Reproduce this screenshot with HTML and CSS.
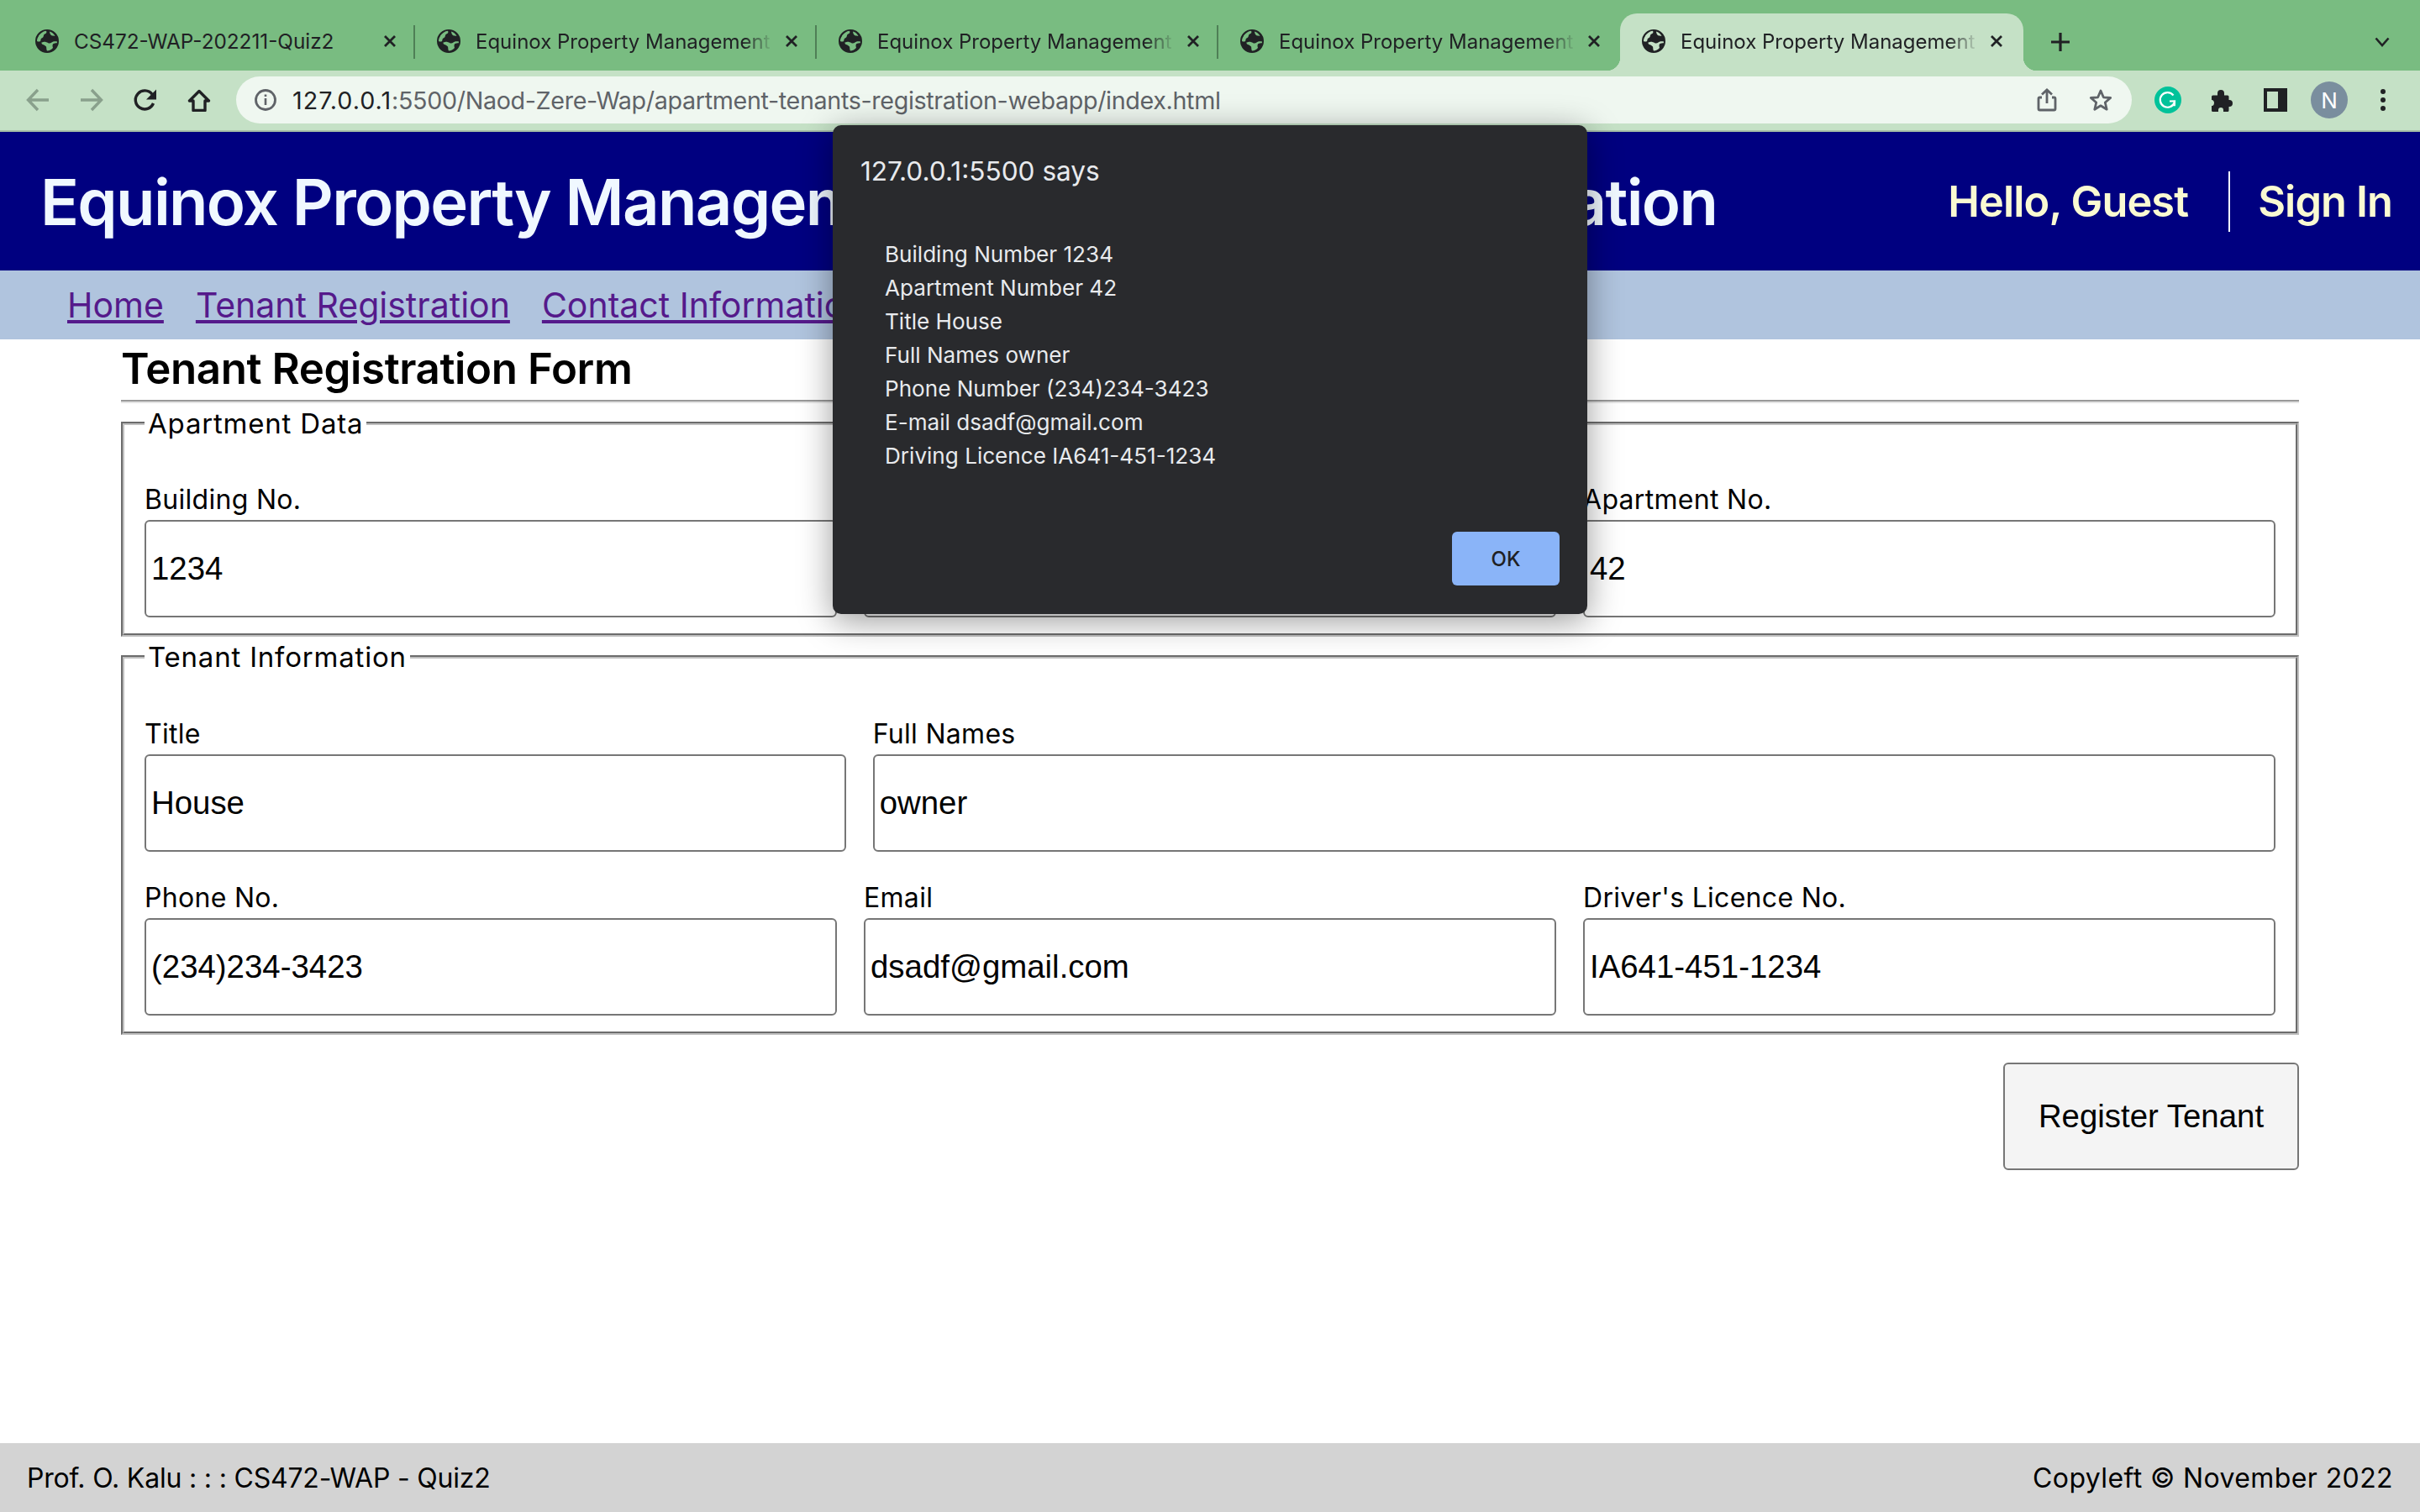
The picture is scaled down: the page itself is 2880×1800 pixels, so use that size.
FILE: index.html
```html
<!DOCTYPE html>
<html lang="en">
<head>
  <meta charset="UTF-8" />
  <title>Equinox Property Management</title>
  <link rel="stylesheet" href="styles.css">
</head>
<body>
  <svg class="defs" width="0" height="0">
    <symbol id="globe" viewBox="0 0 28 28">
      <path fill-rule="evenodd" d="M14 0a14 14 0 1 1 0 28a14 14 0 1 1 0-28z M4 8c-1.500 2-2 4-2 6c1 .5 3 1 4 0c.8-1 0-2.500 1.500-3.500c1.500-.5 2.500-2 2.500-3.500c.5-1.500 2-1.500 3-2.500c.5-1 .5-2 0-2.800c-3.500 .3-7 2.800-9 5.800z M17 2.500c.3 1.500 .5 3.500 2 4.500c1.500 .8 3 .5 4.500 1c-1.300-2.800-3.800-4.800-6.500-5.500z M8 15c-1 1-.5 2.500 1 3c2 .5 2.500 1.500 4 2.500c.5 1.500 0 3.500 1 5c3-.1 5-1.500 7-3.500c-.5-1.500-1-4 .5-5c1.500-.8 3-1 4.300-.8l.2-1.700c-2.500-.5-5-.3-6.500 1c-1.500 1.200-3 1.500-4.500 .5c-1.500-1-5-2-7 -.5z"/>
    </symbol>
    <symbol id="close" viewBox="0 0 16 14">
      <path d="M2 1l12 12M14 1L2 13" fill="none" stroke="currentColor" stroke-width="2.800"/>
    </symbol>
  </svg>

  <div class="tabstrip">
    <div class="tab">
      <svg class="favicon"><use href="#globe"/></svg>
      <span class="tab-title">CS472-WAP-202211-Quiz2</span>
      <svg class="tab-close"><use href="#close"/></svg>
    </div>
    <i class="tab-sep"></i>
    <div class="tab">
      <svg class="favicon"><use href="#globe"/></svg>
      <span class="tab-title fade">Equinox Property Management</span>
      <svg class="tab-close"><use href="#close"/></svg>
    </div>
    <i class="tab-sep"></i>
    <div class="tab">
      <svg class="favicon"><use href="#globe"/></svg>
      <span class="tab-title fade">Equinox Property Management</span>
      <svg class="tab-close"><use href="#close"/></svg>
    </div>
    <i class="tab-sep"></i>
    <div class="tab last">
      <svg class="favicon"><use href="#globe"/></svg>
      <span class="tab-title fade">Equinox Property Management</span>
      <svg class="tab-close"><use href="#close"/></svg>
    </div>
    <div class="tab active">
      <svg class="favicon"><use href="#globe"/></svg>
      <span class="tab-title fade">Equinox Property Management</span>
      <svg class="tab-close"><use href="#close"/></svg>
    </div>
    <svg class="new-tab" viewBox="0 0 24 24"><path d="M12 0v24M0 12h24" stroke="#202124" stroke-width="3.500"/></svg>
    <svg class="tab-list" viewBox="0 0 18 12"><path d="M1.500 1.500L9 10l7.500-8.500" fill="none" stroke="#202124" stroke-width="2.600"/></svg>
  </div>

  <div class="toolbar">
    <div class="tool"><svg class="icon" viewBox="0 0 28 28"><path d="M27 14H3M14 2L2.500 14L14 26" fill="none" stroke="#89a08c" stroke-width="3.400"/></svg></div>
    <div class="tool"><svg class="icon" viewBox="0 0 28 28"><path d="M1 14h24M14 2l11.500 12L14 26" fill="none" stroke="#89a08c" stroke-width="3.400"/></svg></div>
    <div class="tool"><svg class="icon" viewBox="0 0 28 28"><path d="M23.500 18a11 11 0 1 1-1.500-10.800" fill="none" stroke="#202124" stroke-width="3.400"/><path d="M27 1.500v12H15z" fill="#202124"/></svg></div>
    <div class="tool"><svg class="icon" viewBox="0 0 28 28"><path d="M7 26.500h14V15h4.500L14 3.500L2.500 15H7z" fill="none" stroke="#202124" stroke-width="3.400" stroke-linejoin="round"/></svg></div>
    <div class="omnibox">
      <svg class="info" viewBox="0 0 26 26"><circle cx="13" cy="13" r="11.500" fill="none" stroke="#5f6368" stroke-width="2.800"/><path d="M11.700 11h2.600v8h-2.600zM11.700 6.500h2.600v2.600h-2.600z" fill="#5f6368"/></svg>
      <span class="url"><b>127.0.0.1</b>:5500/Naod-Zere-Wap/apartment-tenants-registration-webapp/index.html</span>
      <div class="tool first"><svg class="icon" viewBox="0 0 28 28"><path d="M8 11H5.500a1.500 1.500 0 0 0-1.500 1.500v12a1.500 1.500 0 0 0 1.500 1.500h17a1.500 1.500 0 0 0 1.500-1.500v-12a1.500 1.500 0 0 0-1.500-1.500H20M14 18V2M8 7.500L14 2l6 5.500" fill="none" stroke="#5f6368" stroke-width="2.800"/></svg></div>
      <div class="tool"><svg class="icon" viewBox="0 0 28 28"><path d="M14 3l3.300 7.800l8.400 .7l-6.400 5.500l1.900 8.200L14 20.800l-7.200 4.400l1.900-8.200l-6.400-5.500l8.400-.7z" fill="none" stroke="#5f6368" stroke-width="2.800" stroke-linejoin="round"/></svg></div>
    </div>
    <div class="tool ext"><svg class="icon big" viewBox="0 0 32 32"><circle cx="16" cy="16" r="16" fill="#00c29a"/><path d="M22.500 10.500a8.800 8.800 0 1 0 1.300 8.500M18 17.500l6-.2l-.2 6" fill="none" stroke="#fff" stroke-width="2.200"/></svg></div>
    <div class="tool"><svg class="icon" viewBox="0 0 28 28"><path d="M2 10a1.500 1.500 0 0 1 1.500-1.500H9V6a4 4 0 0 1 8 0v2.500h4a1.500 1.500 0 0 1 1.500 1.500v4h.5a4 4 0 0 1 0 8h-.5v4.500A1.500 1.500 0 0 1 21 28h-5v-2a3 3 0 0 0-6 0v2H3.500A1.500 1.500 0 0 1 2 26.500V21h1a4 4 0 0 0 0-7H2z" fill="#202124"/></svg></div>
    <div class="tool"><svg class="icon" viewBox="0 0 28 28"><path fill-rule="evenodd" d="M0 0h28v28H0z M4 4v20h13V4z" fill="#202124"/></svg></div>
    <div class="tool"><span class="avatar">N</span></div>
    <div class="tool"><svg class="icon" viewBox="0 0 28 28"><circle cx="14" cy="4" r="3" fill="#202124"/><circle cx="14" cy="14" r="3" fill="#202124"/><circle cx="14" cy="24" r="3" fill="#202124"/></svg></div>
  </div>

  <div class="page">
    <header class="site-header">
      <h1 class="site-title">Equinox Property Management <span class="title-mid">- Web Tenant </span>Registration</h1>
      <div class="greeting">
        <span class="hello">Hello, Guest</span>
        <a class="signin">Sign In</a>
      </div>
    </header>

    <nav class="site-nav">
      <a href="#">Home</a>
      <a href="#">Tenant Registration</a>
      <a href="#">Contact Information</a>
    </nav>

    <main class="content">
      <h2 class="form-title">Tenant Registration Form</h2>
      <hr class="rule">
      <form>
        <fieldset class="apartment">
          <legend>Apartment Data</legend>
          <div class="row thirds">
            <div class="field"><label>Building No.</label><input type="text" value="1234"></div>
            <div class="field"><label>Unit</label><input type="text" value=""></div>
            <div class="field"><label>Apartment No.</label><input type="text" value="42"></div>
          </div>
        </fieldset>
        <fieldset>
          <legend>Tenant Information</legend>
          <div class="row one-two">
            <div class="field"><label>Title</label><input type="text" value="House"></div>
            <div class="field"><label>Full Names</label><input type="text" value="owner"></div>
          </div>
          <div class="row thirds lower">
            <div class="field"><label>Phone No.</label><input type="text" value="(234)234-3423"></div>
            <div class="field"><label>Email</label><input type="text" value="dsadf@gmail.com"></div>
            <div class="field"><label>Driver's Licence No.</label><input type="text" value="IA641-451-1234"></div>
          </div>
        </fieldset>
        <div class="actions"><button type="button">Register Tenant</button></div>
      </form>
    </main>

    <footer class="site-footer">
      <span class="prof">Prof. O. Kalu : : : CS472-WAP - Quiz2</span>
      <span class="copy">Copyleft © November 2022</span>
    </footer>
  </div>

  <div class="dialog">
    <div class="dialog-origin">127.0.0.1:5500 says</div>
    <div class="dialog-text">
      <div>Building Number 1234</div>
      <div>Apartment Number 42</div>
      <div>Title House</div>
      <div>Full Names owner</div>
      <div>Phone Number (234)234-3423</div>
      <div>E-mail dsadf@gmail.com</div>
      <div>Driving Licence IA641-451-1234</div>
    </div>
    <div class="dialog-actions"><button type="button" class="ok">OK</button></div>
  </div>
</body>
</html>
```

FILE: styles.css
```css
* { box-sizing: border-box; }

html, body { margin: 0; height: 1800px; overflow: hidden; }

body {
  display: flex;
  flex-direction: column;
  background-color: #fff;
  font-family: Inter, "Liberation Sans", sans-serif;
  color: #000;
}

.defs { position: absolute; }

/* browser chrome */
.tabstrip {
  display: flex;
  align-items: flex-end;
  height: 84px;
  padding-left: 16px;
  background-color: #79bc81;
  flex: none;
}

.tab {
  display: flex;
  align-items: center;
  width: 476px;
  height: 68px;
  padding: 0 20px 2px 26px;
  color: #202124;
}

.tab.last { width: 483px; padding-right: 28px; margin-right: -5px; }

.tab.active {
  position: relative;
  width: 480px;
  padding-right: 24px;
  background-color: #c5e1c6;
  border-radius: 20px 20px 0 0;
}

.tab.active::before,
.tab.active::after {
  content: "";
  position: absolute;
  bottom: 0;
  width: 16px;
  height: 16px;
}

.tab.active::before {
  left: -16px;
  background: radial-gradient(circle at 0 0, transparent 16px, #c5e1c6 16.500px);
}

.tab.active::after {
  right: -16px;
  background: radial-gradient(circle at 100% 0, transparent 16px, #c5e1c6 16.500px);
}

.tab-sep {
  width: 2px;
  height: 40px;
  margin-bottom: 14px;
  background-color: #4f7f56;
  flex: none;
}

.favicon { width: 28px; height: 28px; fill: #202124; flex: none; }

.tab-title {
  flex: 1;
  margin-left: 18px;
  font-size: 24.300px;
  white-space: nowrap;
  overflow: hidden;
}

.tab-title.fade {
  font-size: 24px;
  -webkit-mask-image: linear-gradient(to right, #000 90%, transparent 100%);
  mask-image: linear-gradient(to right, #000 90%, transparent 100%);
}

.tab-close { width: 16px; height: 14px; margin-left: 14px; flex: none; }

.new-tab { width: 22px; height: 22px; margin: 0 0 23px 33px; flex: none; }

.tab-list { width: 18px; height: 12px; margin: 0 36px 28px auto; flex: none; }

.toolbar {
  display: flex;
  align-items: center;
  height: 73px;
  padding: 0 12px 1px 13px;
  background-color: #c5e1c6;
  border-bottom: 2px solid #a5bea7;
  flex: none;
}

.tool {
  display: flex;
  align-items: center;
  justify-content: center;
  width: 64px;
  flex: none;
}

.tool.ext { margin-left: 11px; }

.icon { width: 28px; height: 28px; }
.icon.big { width: 32px; height: 32px; }

.omnibox {
  display: flex;
  align-items: center;
  flex: 1;
  height: 56px;
  margin-left: 12px;
  padding: 0 5px 0 22px;
  background-color: #eff7f0;
  border-radius: 28px;
}

.info { width: 26px; height: 26px; flex: none; }

.url {
  flex: 1;
  margin-left: 19px;
  font-size: 28.700px;
  letter-spacing: -0.35px;
  color: #5f6368;
  white-space: nowrap;
}

.url b { font-weight: 400; letter-spacing: 1px; color: #202124; }

.avatar {
  display: flex;
  align-items: center;
  justify-content: center;
  width: 44px;
  height: 44px;
  border-radius: 50%;
  background-color: #7a8e9e;
  color: #fff;
  font-size: 26px;
}

/* the page */
.page {
  display: flex;
  flex-direction: column;
  flex: 1;
}

.site-header {
  display: flex;
  align-items: center;
  justify-content: space-between;
  height: 165px;
  padding: 0 33px 0 48px;
  background-color: #000080;
  flex: none;
}

.site-title {
  margin: 0;
  font-size: 76px;
  font-weight: 600;
  letter-spacing: -1.700px;
  color: #f0f8ff;
  white-space: nowrap;
}

.title-mid { word-spacing: -8px; }

.greeting {
  display: flex;
  align-items: center;
  color: #fafad2;
  font-size: 50.500px;
  font-weight: 600;
  letter-spacing: -0.9px;
}

.hello { padding-right: 48px; }

.signin {
  padding-left: 33px;
  line-height: 72px;
  border-left: 2px solid #f0f8ff;
}

.site-nav {
  display: flex;
  align-items: center;
  gap: 38px;
  height: 82px;
  padding: 0 80px;
  background-color: #b0c4de;
  flex: none;
}

.site-nav a {
  font-size: 41px;
  color: #551a8b;
}

.content {
  flex: 1;
  padding: 0 144px;
}

.form-title {
  margin: 0;
  font-size: 51px;
  line-height: 70px;
  padding-bottom: 2px;
  font-weight: 600;
  letter-spacing: -0.4px;
}

.rule {
  height: 4px;
  margin: 0;
  border: 0;
  border-top: 2px solid #999;
  border-bottom: 2px solid #e4e4e4;
}

fieldset {
  min-width: 0;
  margin: 2px 0 0;
  padding: 48px 24px 19px;
  border: 4px groove #c0c0c0;
}

fieldset.apartment { padding-top: 47px; }

legend {
  padding: 0 4px;
  font-size: 33px;
  letter-spacing: 0.8px;
  line-height: 44px;
}

.row { display: grid; gap: 32px; }
.row.thirds { grid-template-columns: repeat(3, 1fr); }
.row.one-two { grid-template-columns: 1fr 2fr; }
.row.lower { margin-top: 33px; }

label {
  display: block;
  margin-bottom: 2px;
  font-size: 32px;
  letter-spacing: 0.3px;
  line-height: 44px;
}

input {
  display: block;
  width: 100%;
  height: 116px;
  padding: 0 6px;
  border: 2px solid #767676;
  border-radius: 6px;
  background-color: #fff;
  font-family: "Liberation Sans", Arial, sans-serif;
  font-size: 38.400px;
  color: #000;
}

.actions {
  display: flex;
  justify-content: flex-end;
  margin-top: 33px;
}

.actions button {
  width: 352px;
  height: 128px;
  border: 2px solid #767676;
  border-radius: 6px;
  background-color: #f4f4f4;
  font-family: "Liberation Sans", Arial, sans-serif;
  font-size: 38.400px;
  color: #000;
}

.site-footer {
  display: flex;
  align-items: center;
  justify-content: space-between;
  height: 82px;
  padding: 0 32px;
  background-color: #d3d3d3;
  font-size: 32px;
  flex: none;
}

.prof { letter-spacing: -0.2px; }
.copy { letter-spacing: 0.4px; }

/* alert box */
.dialog {
  position: absolute;
  left: 991px;
  top: 149px;
  display: flex;
  flex-direction: column;
  width: 898px;
  height: 582px;
  padding: 35px 33px 34px;
  background-color: #292a2d;
  border-radius: 10px;
  box-shadow: 0 8px 40px rgba(0, 0, 0, 0.4);
  color: #e8eaed;
}

.dialog-origin {
  font-size: 31.600px;
  line-height: 40px;
}

.dialog-text {
  flex: 1;
  margin-top: 59px;
  padding-left: 29px;
  font-size: 26.100px;
  line-height: 40px;
}

.dialog-actions { display: flex; justify-content: flex-end; }

.ok {
  width: 128px;
  height: 64px;
  border: 0;
  border-radius: 6px;
  background-color: #8ab4f8;
  font-family: Inter, sans-serif;
  font-size: 24px;
  font-weight: 500;
  color: #202124;
}
```
